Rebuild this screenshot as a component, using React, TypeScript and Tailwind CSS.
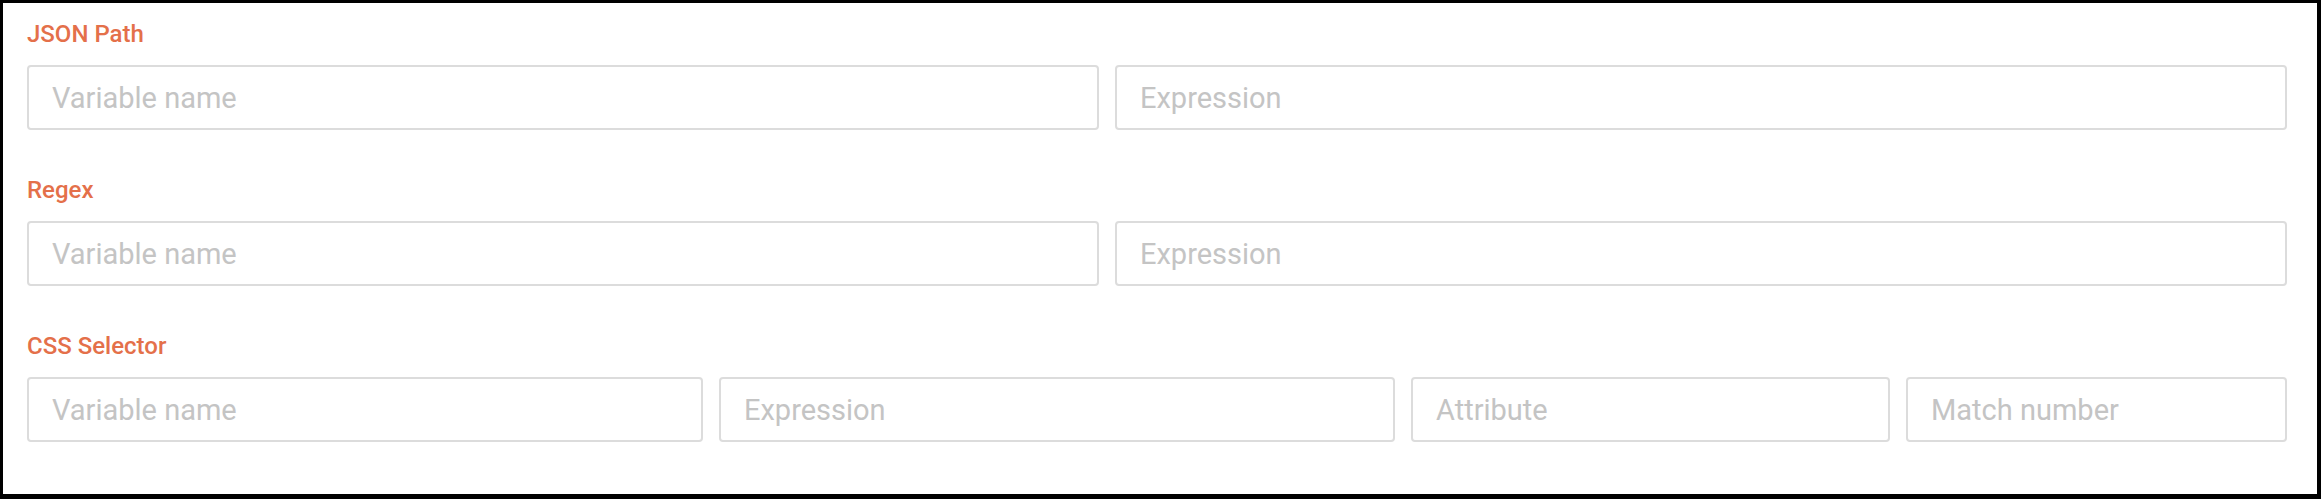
const font = { fontFamily: "Roboto, 'Liberation Sans', sans-serif" };

function Field({ placeholder }: { placeholder: string }) {
  return (
    <input
      type="text"
      placeholder={placeholder}
      className="h-[65px] w-full min-w-0 rounded-[4px] border-2 border-[#dcdcdc] bg-white pr-[21px] pl-[23px] text-[29px] text-[#333] outline-none placeholder:text-[#c4c4c4]"
    />
  );
}

function Section({ title, children }: { title: string; children: React.ReactNode }) {
  return (
    <div>
      <div className="mb-[17px] text-[24px] font-medium leading-[28px] text-[#e4704a]">{title}</div>
      {children}
    </div>
  );
}

export default function App() {
  return (
    <div
      style={font}
      className="h-[499px] w-[2321px] border-t-[3px] border-r-4 border-b-[5px] border-l-[3px] border-black bg-white pt-[17px] pr-[30px] pl-[24px]"
    >
      <div className="flex flex-col gap-[46px]">
        <Section title="JSON Path">
          <div className="grid grid-cols-[1072px_1fr] gap-4">
            <Field placeholder="Variable name" />
            <Field placeholder="Expression" />
          </div>
        </Section>
        <Section title="Regex">
          <div className="grid grid-cols-[1072px_1fr] gap-4">
            <Field placeholder="Variable name" />
            <Field placeholder="Expression" />
          </div>
        </Section>
        <Section title="CSS Selector">
          <div className="grid grid-cols-[676px_676px_479px_1fr] gap-4">
            <Field placeholder="Variable name" />
            <Field placeholder="Expression" />
            <Field placeholder="Attribute" />
            <Field placeholder="Match number" />
          </div>
        </Section>
      </div>
    </div>
  );
}
